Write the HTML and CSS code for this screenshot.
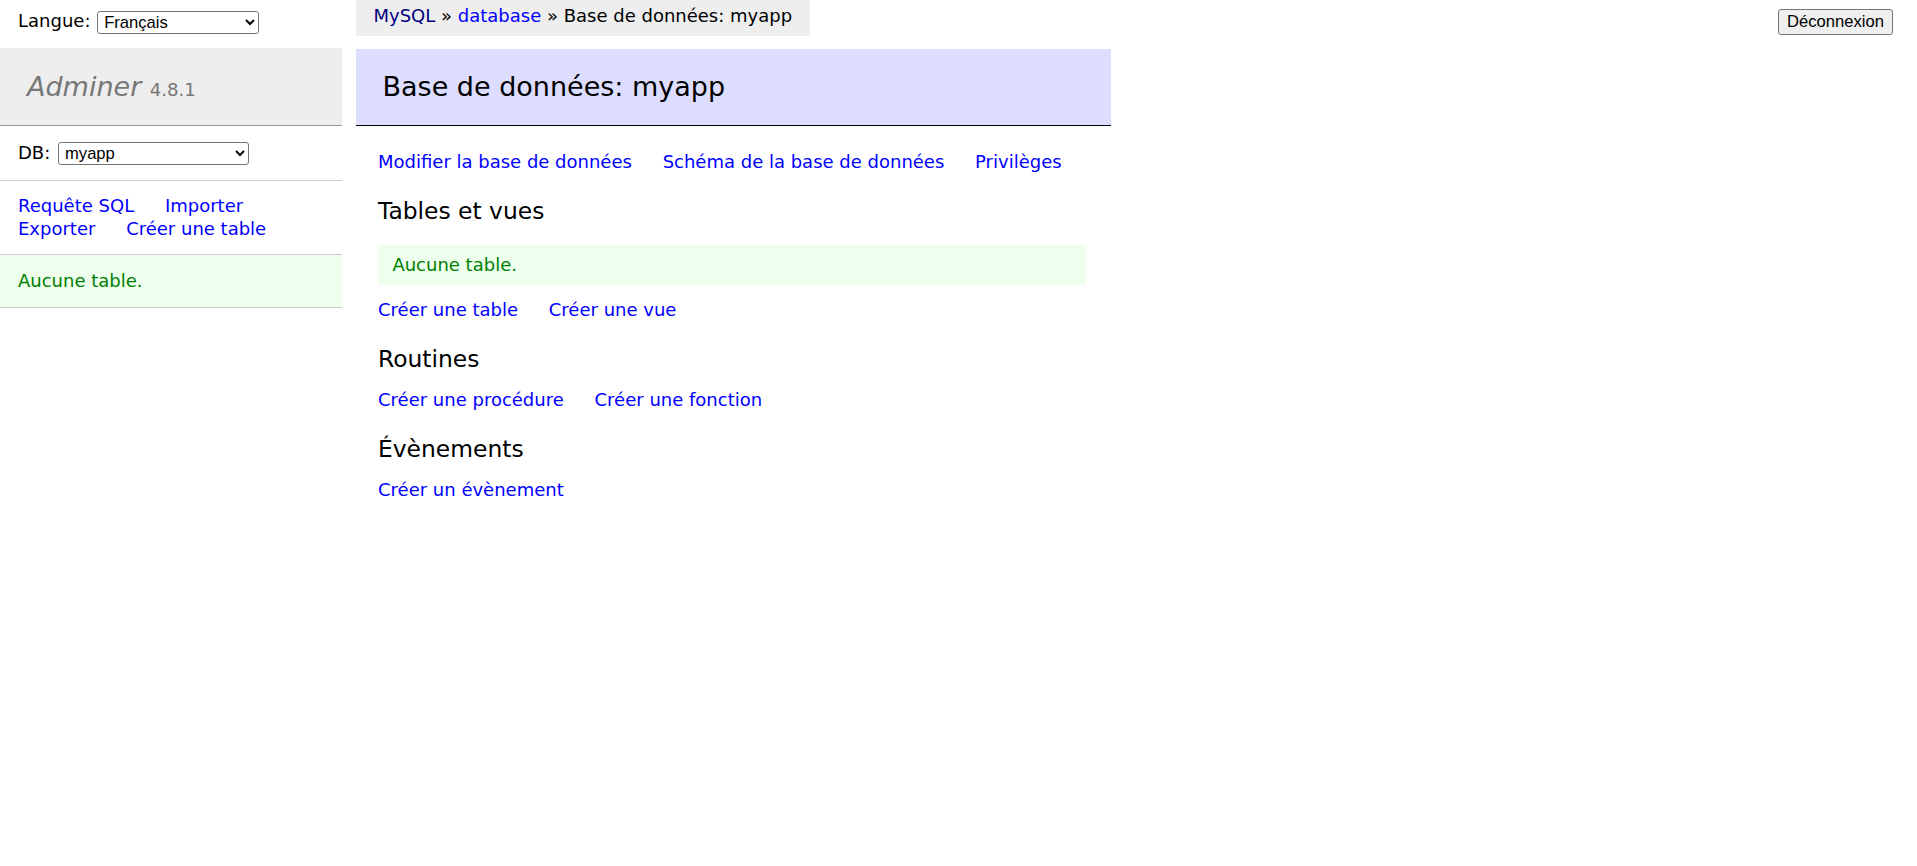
FILE: index.html
```
<!DOCTYPE html>
<html lang="fr">
<head>
<meta charset="utf-8">
<title>Base de données: myapp - Adminer</title>
<link rel="stylesheet" href="styles.css">
</head>
<body>
<div class="page">
  <aside class="sidebar">
    <form class="lang">Langue: <select class="sel sel-lang"><option>Français</option></select></form>
    <div class="menu">
      <h1 class="brand"><a href="#" class="brand-link">Adminer</a> <span class="version">4.8.1</span></h1>
      <p class="menu-block dbs"><span title="base de données">DB</span>: <select class="sel sel-db"><option>myapp</option></select></p>
      <p class="menu-block links"><a href="#">Requête SQL</a>
<a href="#">Importer</a>
<a href="#">Exporter</a>
<a href="#">Créer une table</a></p>
      <p class="menu-block message tables">Aucune table.</p>
    </div>
  </aside>
  <main class="main">
    <p class="breadcrumb"><a href="#" class="visited">MySQL</a> » <a href="#">database</a> » Base de données: myapp</p>
    <div class="content">
      <h2 class="title">Base de données: myapp</h2>
      <p class="links"><a href="#">Modifier la base de données</a>
<a href="#">Schéma de la base de données</a>
<a href="#">Privilèges</a></p>
      <h3 class="section">Tables et vues</h3>
      <p class="message box">Aucune table.</p>
      <p class="links"><a href="#">Créer une table</a>
<a href="#">Créer une vue</a></p>
      <h3 class="section">Routines</h3>
      <p class="links"><a href="#">Créer une procédure</a>
<a href="#">Créer une fonction</a></p>
      <h3 class="section">Évènements</h3>
      <p class="links"><a href="#">Créer un évènement</a></p>
    </div>
  </main>
  <form class="logout"><button type="button" class="logout-btn">Déconnexion</button></form>
</div>
</body>
</html>
```

FILE: styles.css
```
html, body {
  margin: 0;
  padding: 0;
  background: #fff;
}
body {
  color: #000;
  font: 18px/1.25 "DejaVu Sans", Verdana, sans-serif;
}
a {
  color: #00f;
  text-decoration: none;
}
a.visited {
  color: #000080;
}
.page {
  display: flex;
  align-items: flex-start;
}
.sidebar {
  width: 342px;
  flex: none;
}
.lang {
  margin: 0;
  padding: 5.4px 18px;
  line-height: 32.4px;
  height: 32.4px;
}
.sel {
  font: 16.6px "Liberation Sans", Arial, sans-serif;
  height: 23px;
  border: 1px solid #767676;
  border-radius: 3px;
  background: #fff;
  color: #000;
  vertical-align: middle;
  padding: 0 0 0 2px;
}
.sel-lang {
  width: 162px;
  margin-left: 1px;
}
.sel-db {
  width: 191px;
  margin-left: 2px;
}
.menu {
  margin-top: 5.3px;
}
.brand {
  font-size: 27px;
  font-weight: normal;
  margin: 0;
  padding: 21.6px 27px;
  border-bottom: 1px solid #999;
  color: #777;
  background: #eee;
  line-height: 1.25;
}
.brand-link {
  color: #777;
  font-style: italic;
}
.version {
  color: #777;
  font-size: 67%;
}
.menu-block {
  margin: 0;
  padding: 14.4px 18px;
  border-bottom: 1px solid #ccc;
}
.dbs {
  line-height: 23.7px;
}
.links a {
  white-space: nowrap;
  margin-right: 25px;
}
.message {
  color: green;
  background: #efe;
}
.main {
  margin-left: 13.5px;
  width: 755px;
  flex: none;
}
.breadcrumb {
  display: inline-block;
  margin: 0;
  white-space: nowrap;
  background: #eee;
  height: 36px;
  line-height: 32.4px;
  padding: 0 18px;
}
.content {
  margin-top: 12.5px;
}
.title {
  font-size: 27px;
  font-weight: normal;
  margin: 0 0 25px;
  padding: 21.6px 27px;
  border-bottom: 1px solid #000;
  color: #000;
  background: #ddf;
  line-height: 1.25;
}
.content .links {
  margin: 14.4px 0 0 22.5px;
  white-space: nowrap;
}
.section {
  font-weight: normal;
  font-size: 23.4px;
  line-height: 1.25;
  margin: 23.4px 0 0 22.5px;
}
.box {
  margin: 18px 25px 0 22.5px;
  padding: 9px 14.4px;
}
.logout {
  margin: 9px 24px 0 auto;
}
.logout-btn {
  font: 16.6px "Liberation Sans", Arial, sans-serif;
  color: #000;
  background: #efefef;
  border: 1px solid #767676;
  border-radius: 3px;
  padding: 2px 7px;
  width: 115px;
  height: 26px;
}
```
